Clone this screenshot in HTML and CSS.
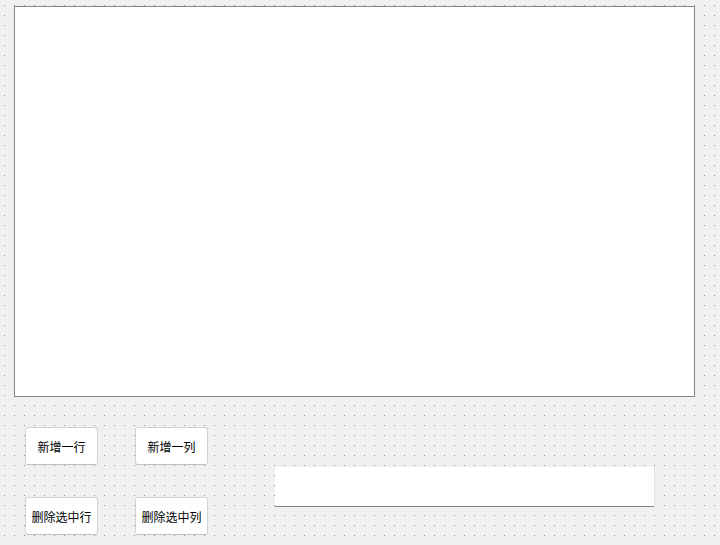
FILE: index.html
```html
<!DOCTYPE html>
<html lang="zh-CN">
<head>
    <meta charset="UTF-8">
    <meta name="viewport" content="width=device-width, initial-scale=1.0">
    <title>表格编辑</title>
    <link rel="stylesheet" href="styles.css">
</head>
<body>
    <div class="form">
        <div class="table-view"></div>
        <div class="controls">
            <div class="button-grid">
                <button class="push-button">新增一行</button>
                <button class="push-button">新增一列</button>
                <button class="push-button">删除选中行</button>
                <button class="push-button">删除选中列</button>
            </div>
            <input type="text" class="line-edit" value="">
        </div>
    </div>
</body>
</html>
```

FILE: styles.css
```css
html, body {
    height: 100%;
    margin: 0;
    font-family: "Noto Sans CJK SC", "Noto Sans", sans-serif;
    font-size: 12px;
    color: #000000;
    overflow: hidden;
}
body {
    background-color: #f0f0f0;
    /* designer grid: one dot every 10px */
    background-image:
        linear-gradient(to bottom, #f0f0f0 5px, transparent 5px, transparent 6px, #f0f0f0 6px),
        linear-gradient(to right, transparent 4px, #8e8e8e 4px, #8e8e8e 5px, transparent 5px);
    background-size: 10px 10px;
}
.form {
    padding: 6px 0 0 14px;
}
.table-view {
    width: 679px;
    height: 389px;
    background-color: #ffffff;
    border: 1px solid #7f8590;
}
.controls {
    display: flex;
    align-items: flex-start;
    padding: 30px 0 0 11px;
}
.button-grid {
    display: grid;
    grid-template-columns: 73px 73px;
    grid-auto-rows: 38px;
    column-gap: 37px;
    row-gap: 32px;
}
.push-button {
    font-family: inherit;
    font-size: 12px;
    color: #000000;
    background-color: #ffffff;
    border: 1px solid #d3d3d3;
    border-bottom-color: #c0c0c0;
    border-radius: 3px;
    padding: 0;
    text-align: center;
}
.line-edit {
    margin: 40px 0 0 67px;
    width: 379px;
    height: 40px;
    box-sizing: border-box;
    padding: 0 4px;
    background-color: #ffffff;
    border: none;
    border-bottom: 1px solid #858585;
    box-shadow: 1px 0 0 #e2e2e2;
    outline: none;
}
```
